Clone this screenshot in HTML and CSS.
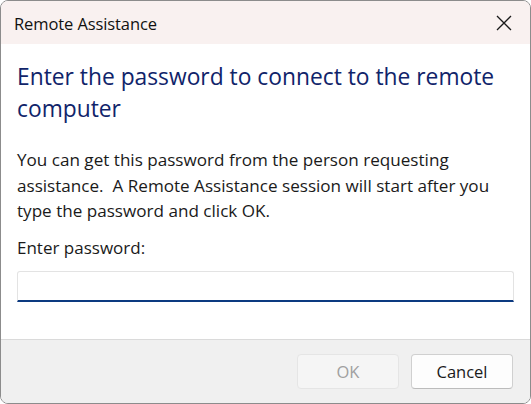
FILE: index.html
```html
<!DOCTYPE html>
<html lang="en">
<head>
<meta charset="utf-8">
<title>Remote Assistance</title>
<link rel="stylesheet" href="styles.css">
</head>
<body>
<div class="window">
  <div class="titlebar">
    <span class="title">Remote Assistance</span>
    <button class="close" aria-label="Close">
      <svg width="16" height="16" viewBox="0 0 16 16"><path d="M1 1 L15 15 M15 1 L1 15" stroke="#1a1a1a" stroke-width="1.3" fill="none"/></svg>
    </button>
  </div>
  <div class="content">
    <h1 class="heading">Enter the password to connect to the remote<br>computer</h1>
    <p class="desc">You can get this password from the person requesting<br>assistance.&nbsp; A Remote Assistance session will start after you<br>type the password and click OK.</p>
    <label class="label" for="pw">Enter password:</label>
    <input class="input" id="pw" type="password">
  </div>
  <div class="footer">
    <button class="btn btn-disabled" disabled>OK</button>
    <button class="btn">Cancel</button>
  </div>
</div>
</body>
</html>
```
FILE: styles.css
```css
html, body {
  margin: 0;
  padding: 0;
  background: #ffffff;
}
body {
  font-family: "Open Sans", "Noto Sans", sans-serif;
  color: #1a1a1a;
}
.window {
  box-sizing: border-box;
  width: 531px;
  height: 404px;
  border: 1px solid #8c8c8c;
  border-radius: 8px;
  overflow: hidden;
  display: flex;
  flex-direction: column;
  background: #ffffff;
}
.titlebar {
  height: 43px;
  flex: none;
  background: #f9f1f0;
  display: flex;
  align-items: center;
  justify-content: space-between;
  padding-left: 13px;
}
.title {
  font-size: 16.5px;
  letter-spacing: -0.1px;
  color: #111;
  margin-top: 1px;
}
.close {
  width: 46px;
  height: 43px;
  border: none;
  background: transparent;
  display: flex;
  align-items: center;
  justify-content: center;
  padding: 0;
  margin-right: 3px;
}
.content {
  flex: 1;
  padding: 17px 16px 0 16px;
  display: flex;
  flex-direction: column;
}
.heading {
  margin: 0;
  font-weight: normal;
  font-size: 22.8px;
  line-height: 32px;
  color: #10246a;
  white-space: nowrap;
}
.desc {
  margin: 22px 0 0 0;
  font-size: 17.1px;
  line-height: 25.5px;
  color: #1a1a1a;
  white-space: nowrap;
}
.label {
  margin-top: 11px;
  font-size: 17px;
  line-height: 25px;
}
.input {
  box-sizing: border-box;
  margin-top: 11px;
  width: 497px;
  height: 31px;
  border: 1px solid #e3e3e3;
  border-bottom: 2px solid #0c3a80;
  border-radius: 3px 3px 0 0;
  outline: none;
  background: #fff;
}
.footer {
  flex: none;
  height: 64px;
  box-sizing: border-box;
  background: #f0f0f0;
  border-top: 1px solid #dadada;
  display: flex;
  justify-content: flex-end;
  align-items: flex-start;
  gap: 12px;
  padding: 14px 17px 0 0;
}
.btn {
  box-sizing: border-box;
  width: 102px;
  height: 35px;
  border: 1px solid #d0d0d0;
  border-bottom-color: #bcbcbc;
  border-radius: 4px;
  background: #fdfdfd;
  font-family: "Open Sans", "Noto Sans", sans-serif;
  font-size: 16.5px;
  color: #1a1a1a;
  padding: 0;
}
.btn-disabled {
  background: #f5f5f5;
  border-color: #e5e5e5;
  color: #a0a0a0;
}
```
